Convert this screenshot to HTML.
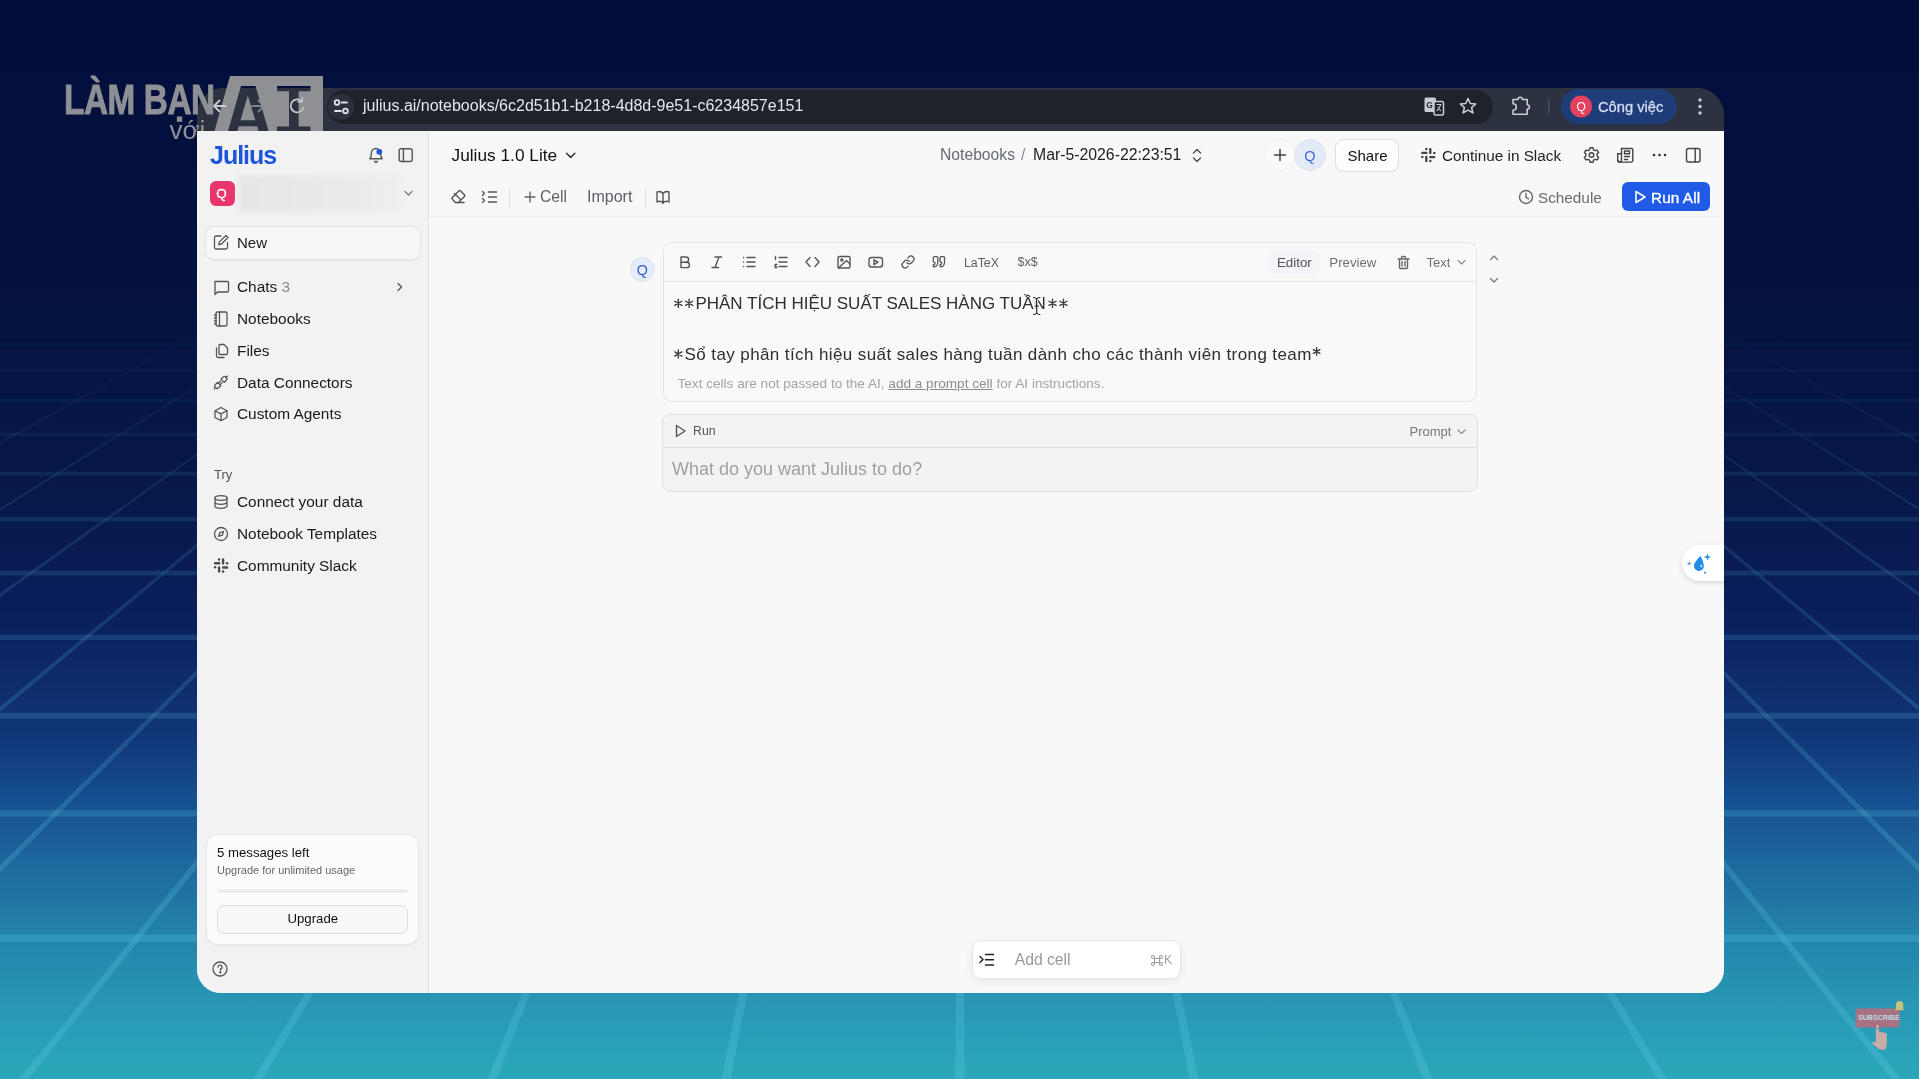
<!DOCTYPE html>
<html><head><meta charset="utf-8">
<style>
*{box-sizing:border-box;margin:0;padding:0}
html,body{width:1919px;height:1079px;overflow:hidden}
body{position:relative;font-family:"Liberation Sans",sans-serif;background:linear-gradient(180deg,#020f3c 0px,#04113d 270px,#061747 470px,#0a1e5a 610px,#11377a 740px,#15508f 800px,#1e6aa0 870px,#2389ac 950px,#2898b5 1010px,#2ca8ba 1079px)}
.abs{position:absolute}
.t{position:absolute;white-space:nowrap;line-height:1}
#win{position:absolute;left:197px;top:88px;width:1526.5px;height:904.5px;border-radius:27px 27px 24px 24px;overflow:hidden;background:linear-gradient(180deg,#2c3240 0,#2c3240 43px,#f4f4f4 43px,#f8f8f8 100%)}
#pg{position:absolute;left:-197px;top:-88px;width:1919px;height:1079px}
</style></head>
<body>
<svg class="abs" style="left:0;top:0" width="1919" height="1079"><defs><linearGradient id="fade" x1="0" y1="0" x2="0" y2="1"><stop offset="0.28" stop-color="#fff" stop-opacity="0"/><stop offset="0.5" stop-color="#fff" stop-opacity="0.45"/><stop offset="1" stop-color="#fff" stop-opacity="1"/></linearGradient><mask id="m"><rect width="1919" height="1079" fill="url(#fade)"/></mask></defs><g mask="url(#m)" fill="#5cc8e6" fill-opacity="0.30"><rect x="0" y="1099.54" width="1919" height="8.68"/><rect x="0" y="934.57" width="1919" height="7.48"/><rect x="0" y="810.08" width="1919" height="6.57"/><rect x="0" y="712.81" width="1919" height="5.86"/><rect x="0" y="634.70" width="1919" height="5.29"/><rect x="0" y="570.60" width="1919" height="4.82"/><rect x="0" y="517.05" width="1919" height="4.43"/><rect x="0" y="471.64" width="1919" height="4.10"/><rect x="0" y="432.66" width="1919" height="3.81"/><rect x="0" y="398.81" width="1919" height="3.57"/><rect x="0" y="369.16" width="1919" height="3.35"/><rect x="0" y="342.97" width="1919" height="3.16"/><rect x="0" y="319.67" width="1919" height="2.99"/><rect x="0" y="298.80" width="1919" height="2.84"/><rect x="0" y="279.99" width="1919" height="2.70"/><rect x="0" y="262.97" width="1919" height="2.58"/><polygon points="-1150.50,1079 -1141.50,1079 330.81,260 328.11,260"/><polygon points="-916.50,1079 -907.50,1079 400.87,260 398.17,260"/><polygon points="-682.50,1079 -673.50,1079 470.93,260 468.23,260"/><polygon points="-448.50,1079 -439.50,1079 540.99,260 538.29,260"/><polygon points="-214.50,1079 -205.50,1079 611.05,260 608.35,260"/><polygon points="19.50,1079 28.50,1079 681.11,260 678.41,260"/><polygon points="253.50,1079 262.50,1079 751.17,260 748.47,260"/><polygon points="487.50,1079 496.50,1079 821.23,260 818.53,260"/><polygon points="721.50,1079 730.50,1079 891.29,260 888.59,260"/><polygon points="955.50,1079 964.50,1079 961.35,260 958.65,260"/><polygon points="1189.50,1079 1198.50,1079 1031.41,260 1028.71,260"/><polygon points="1423.50,1079 1432.50,1079 1101.47,260 1098.77,260"/><polygon points="1657.50,1079 1666.50,1079 1171.53,260 1168.83,260"/><polygon points="1891.50,1079 1900.50,1079 1241.59,260 1238.89,260"/><polygon points="2125.50,1079 2134.50,1079 1311.65,260 1308.95,260"/><polygon points="2359.50,1079 2368.50,1079 1381.71,260 1379.01,260"/><polygon points="2593.50,1079 2602.50,1079 1451.77,260 1449.07,260"/><polygon points="2827.50,1079 2836.50,1079 1521.83,260 1519.13,260"/><polygon points="3061.50,1079 3070.50,1079 1591.89,260 1589.19,260"/></g></svg>
<div id="win"><div id="pg">
<div class="abs" style="left:197px;top:88px;width:1528px;height:43px;background:#2c3240"></div>
<svg class="abs" style="left:0;top:0" width="1919" height="140">
  <g stroke="#c9ccd3" stroke-width="1.8" fill="none" stroke-linecap="round" stroke-linejoin="round">
    <path d="M226 106 L214 106 M219.5 100.5 L214 106 L219.5 111.5"/>
    <path d="M252 106 L264 106 M258.5 100.5 L264 106 L258.5 111.5" stroke="#7d818a"/>
    <path d="M302 101.5 A6.5 6.5 0 1 0 303.5 107.5 M302.5 97.5 L302.5 101.8 L298.3 101.8"/>
  </g>
  <rect x="327" y="90" width="1166" height="34" rx="17" fill="#1e222b"/>
  <circle cx="341" cy="107" r="13" fill="#2c313c"/>
  <g stroke="#dfe2e8" stroke-width="1.8" fill="none" stroke-linecap="round">
    <circle cx="337" cy="102.5" r="2.3"/><path d="M341.5 102.5 L347 102.5"/>
    <circle cx="345.5" cy="111" r="2.3"/><path d="M335 111 L341 111"/>
  </g>
  <g stroke="#c9ccd3" stroke-width="1.6" fill="none" stroke-linejoin="round">
    <rect x="1424.5" y="97.5" width="11.5" height="14.5" rx="1.5" fill="#c9ccd3" stroke="none"/>
    <rect x="1434" y="101.5" width="9.5" height="13.5" rx="1.5" fill="#1e222b" stroke="#c9ccd3" stroke-width="1.5"/>
    <path d="M1436.5 104.5 h4.5 l-4 6.5 M1437.8 107.5 l3.2 3.5" stroke="#c9ccd3" stroke-width="1.1"/>
    <path d="M1468 98.5 l2.3 5 5.4 0.5 -4.1 3.6 1.3 5.3 -4.9 -2.8 -4.9 2.8 1.3 -5.3 -4.1 -3.6 5.4 -0.5 z"/>
    <path d="M1513 99.5 h5 a2.2 2.2 0 0 1 4.4 0 h4.8 v5.2 a2.2 2.2 0 0 1 0 4.4 v5.2 h-14.2 v-4 a2.6 2.6 0 0 0 0 -6.6 z"/>
  </g>
  <rect x="1548" y="99" width="1.5" height="15" fill="#4b505b"/>
  <rect x="1561" y="89" width="116" height="35" rx="17.5" fill="#1e3c78"/>
  <circle cx="1581" cy="106.5" r="11" fill="#e5405e"/>
  <g fill="#c9ccd3"><circle cx="1700" cy="100" r="1.7"/><circle cx="1700" cy="106.5" r="1.7"/><circle cx="1700" cy="113" r="1.7"/></g>
</svg>
<div class="t" style="left:363px;top:98.46px;font-size:16px;color:#e3e6ec;font-weight:400;">julius.ai/notebooks/6c2d51b1-b218-4d8d-9e51-c6234857e151</div>
<div class="t" style="left:1576.5px;top:100.84px;font-size:12px;color:#fff;font-weight:400;">Q</div>
<div class="t" style="left:1426.3px;top:101.00px;font-size:8.5px;color:#1e222b;font-weight:700;">G</div>
<div class="t" style="left:1598px;top:99.56px;font-size:14.7px;color:#d3ddf3;font-weight:400;-webkit-text-stroke:0.3px #d3ddf3">Công việc</div>
<div class="abs" style="left:197px;top:131px;width:232px;height:863px;background:#f2f2f2;border-right:1px solid #e3e3e3"></div>
<div class="abs" style="left:429px;top:131px;width:1296px;height:863px;background:#f8f8f8"></div>
<div class="t" style="left:210px;top:142.84px;font-size:25px;color:#1b55dc;font-weight:700;letter-spacing:-1px">Julius</div>
<svg class="abs" style="left:0;top:0" width="440" height="1000">
 <g stroke="#555" stroke-width="1.4" fill="none" stroke-linecap="round" stroke-linejoin="round">
  <path d="M369.8 158.7 c1.6 -1.5 1.6 -3.3 1.6 -5.6 a4.6 4.6 0 0 1 9.2 0 c0 2.3 0 4.1 1.6 5.6 z"/><path d="M374.6 161.2 l1.4 1.2 1.4 -1.2"/>
  <rect x="399.2" y="148.8" width="13" height="12.7" rx="2"/><path d="M403.4 148.8 v12.7"/>
  <path d="M405 191.5 l3.5 3.5 3.5 -3.5" stroke="#777" stroke-width="1.2"/>
 </g>
 <circle cx="379.3" cy="151.8" r="2.9" fill="#1b55dc"/>
</svg>
<div class="abs" style="left:210px;top:181px;width:25px;height:25px;background:#e8356b;border-radius:6px"></div>
<div class="t" style="left:216.3px;top:186.77px;font-size:13.5px;color:#fff;font-weight:400;-webkit-text-stroke:0.3px #fff">Q</div>
<div class="abs" style="left:238px;top:175px;width:162px;height:37px;background:linear-gradient(90deg,#e9e6e9,#ebe9eb 60%,#efefef);filter:blur(2px)"></div>
<div class="abs" style="left:205px;top:226px;width:216px;height:34px;background:#f7f7f7;border:1px solid #e2e2e2;border-radius:9px;box-shadow:0 1px 1px rgba(0,0,0,0.04)"></div>
<div class="t" style="left:237px;top:235.30px;font-size:15px;color:#1a1a1a;font-weight:400;">New</div>
<div class="t" style="left:237px;top:279.26px;font-size:15.4px;color:#1a1a1a;font-weight:400;">Chats <span style="color:#8a8a8a">3</span></div>
<div class="t" style="left:237px;top:311.16px;font-size:15.4px;color:#1a1a1a;font-weight:400;">Notebooks</div>
<div class="t" style="left:237px;top:342.96px;font-size:15.4px;color:#1a1a1a;font-weight:400;">Files</div>
<div class="t" style="left:237px;top:374.96px;font-size:15.4px;color:#1a1a1a;font-weight:400;">Data Connectors</div>
<div class="t" style="left:237px;top:405.96px;font-size:15.4px;color:#1a1a1a;font-weight:400;">Custom Agents</div>
<div class="t" style="left:214px;top:468.00px;font-size:13px;color:#555;font-weight:400;">Try</div>
<div class="t" style="left:237px;top:493.96px;font-size:15.4px;color:#1a1a1a;font-weight:400;">Connect your data</div>
<div class="t" style="left:237px;top:525.66px;font-size:15.4px;color:#1a1a1a;font-weight:400;">Notebook Templates</div>
<div class="t" style="left:237px;top:557.56px;font-size:15.4px;color:#1a1a1a;font-weight:400;">Community Slack</div>
<svg class="abs" style="left:0;top:0" width="440" height="1000">
 <g stroke="#555" stroke-width="1.3" fill="none" stroke-linecap="round" stroke-linejoin="round">
  <!-- new (edit) -->
  <path d="M221 236 h-5 a1.5 1.5 0 0 0 -1.5 1.5 v10 a1.5 1.5 0 0 0 1.5 1.5 h10 a1.5 1.5 0 0 0 1.5 -1.5 v-5"/>
  <path d="M226 235.5 l2 2 -6.5 6.5 -2.8 0.7 0.7 -2.8 z"/>
  <!-- chats -->
  <path d="M215 281.5 h12.5 a1 1 0 0 1 1 1 v8.5 a1 1 0 0 1 -1 1 h-10 l-2.5 2.5 z"/>
  <path d="M398 283.5 l3.5 3.5 -3.5 3.5"/>
  <!-- notebooks -->
  <rect x="216" y="312" width="11" height="14" rx="1.5"/><path d="M219.5 312 v14 M214.5 315 h2 M214.5 318 h2 M214.5 321 h2 M214.5 324 h2"/>
  <!-- files -->
  <path d="M220 344.5 h4 l3.5 3.5 v5.5 a1 1 0 0 1 -1 1 h-6.5 a1 1 0 0 1 -1 -1 v-8 a1 1 0 0 1 1 -1 z"/>
  <path d="M216.5 348 v8 a1.5 1.5 0 0 0 1.5 1.5 h6"/>
  <!-- data connectors -->
  <g transform="translate(220.8,382.45) rotate(-44)" stroke-width="1.25"><path d="M-9.2 0 H-7 M-1.6 -1.1 H0.6 M-1.6 1.1 H0.6 M7 0 H9.2"/><path d="M-1.6 -2.3 H-4.6 A2.3 2.3 0 0 0 -4.6 2.3 H-1.6 Z" transform="translate(-0.6,0)"/><path d="M1.8 -2.3 H4.6 A2.3 2.3 0 0 1 4.6 2.3 H1.8 Z" transform="translate(0.6,0)"/></g>
  <!-- custom agents (cube) -->
  <path d="M221 407.5 l6 3.2 v6.8 l-6 3.2 -6 -3.2 v-6.8 z M215 410.7 l6 3.2 6 -3.2 M221 413.9 v6.8"/>
  <!-- connect your data (db) -->
  <ellipse cx="221" cy="498" rx="6" ry="2.3"/><path d="M215 498 v8 a6 2.3 0 0 0 12 0 v-8 M215 502 a6 2.3 0 0 0 12 0"/>
  <!-- compass -->
  <circle cx="221" cy="534" r="6.5"/><path d="M223.5 531.5 l-1.2 3.7 -3.7 1.2 1.2 -3.7 z"/>
  <!-- help -->
  <circle cx="220" cy="969" r="7"/><path d="M218 967 a2 2 0 1 1 2.5 2 v1.2"/><circle cx="220.3" cy="972.5" r="0.5" fill="#555"/>
 </g>
 <g stroke="#4a4a4a" stroke-width="2.4" stroke-linecap="round" fill="none">
  <path d="M223.1 559.5 V563.4 M215.1 563.3 H219.2 M219.1 567.4 V571.4 M223.1 567.5 H227.1"/>
 </g>
 <g fill="#4a4a4a"><circle cx="219.1" cy="559.4" r="1.25"/><circle cx="227.1" cy="563.3" r="1.25"/><circle cx="215.1" cy="567.3" r="1.25"/><circle cx="223.1" cy="571.4" r="1.25"/></g>
</svg>
<div class="abs" style="left:206px;top:834px;width:213px;height:111px;background:#fcfcfc;border:1px solid #e6e6e6;border-radius:12px;box-shadow:0 1px 2px rgba(0,0,0,0.04)"></div>
<div class="t" style="left:217px;top:845.83px;font-size:13.2px;color:#111;font-weight:400;">5 messages left</div>
<div class="t" style="left:217px;top:865.19px;font-size:11px;color:#666;font-weight:400;">Upgrade for unlimited usage</div>
<div class="abs" style="left:217px;top:889px;width:191px;height:4px;background:#ececec;border-radius:2px"></div>
<div class="abs" style="left:217px;top:905px;width:191px;height:29px;background:#f7f7f7;border:1px solid #dcdcdc;border-radius:7px"></div>
<div class="t" style="left:287.5px;top:912.33px;font-size:13.2px;color:#111;font-weight:400;">Upgrade</div>
<div class="t" style="left:451.5px;top:146.86px;font-size:17.3px;color:#111;font-weight:400;">Julius 1.0 Lite</div>
<div class="t" style="left:940px;top:147.21px;font-size:15.7px;color:#666a73;font-weight:400;">Notebooks</div>
<div class="t" style="left:1021px;top:147.21px;font-size:15.7px;color:#8a8d94;font-weight:400;">/</div>
<div class="t" style="left:1033px;top:147.13px;font-size:15.8px;color:#222;font-weight:400;">Mar-5-2026-22:23:51</div>
<div class="abs" style="left:429px;top:216px;width:1294px;height:1px;background:#ececec"></div>
<svg class="abs" style="left:0;top:0" width="1919" height="1000">
 <g stroke="#333" stroke-width="1.5" fill="none" stroke-linecap="round" stroke-linejoin="round">
  <path d="M566.5 153.2 l4.2 4.2 4.2 -4.2"/>
  <path d="M1193.5 153 l3.5 -3.5 3.5 3.5 M1193.5 158 l3.5 3.5 3.5 -3.5" stroke="#555"/>
  <path d="M1280 149.5 v11 M1274.5 155 h11" stroke="#444"/>
 </g>
 <circle cx="1280" cy="155" r="15.5" fill="#fafafa" stroke="#e6e6e6" stroke-dasharray="2 2"/>
 <g stroke="#444" stroke-width="1.5" stroke-linecap="round"><path d="M1280 149.5 v11 M1274.5 155 h11"/></g>
 <circle cx="1310" cy="155" r="15.5" fill="#e4ebf8" stroke="#dfe4ee" stroke-width="1"/>
 <g stroke="#444" stroke-width="1.4" fill="none" stroke-linecap="round" stroke-linejoin="round">
  <!-- slack -->
  <g transform="translate(1207.2,-410.4)">
   <g stroke="#444" stroke-width="2.4" stroke-linecap="round" fill="none">
    <path d="M223.1 559.5 V563.4 M215.1 563.3 H219.2 M219.1 567.4 V571.4 M223.1 567.5 H227.1"/>
   </g>
   <g fill="#444" stroke="none"><circle cx="219.1" cy="559.4" r="1.25"/><circle cx="227.1" cy="563.3" r="1.25"/><circle cx="215.1" cy="567.3" r="1.25"/><circle cx="223.1" cy="571.4" r="1.25"/></g>
  </g>
  <!-- gear -->
  <circle cx="1591.5" cy="155" r="2.3"/>
  <path d="M1590 147.8 h3 l0.5 2 1.6 0.9 2 -0.6 1.5 2.6 -1.5 1.4 v1.8 l1.5 1.4 -1.5 2.6 -2 -0.6 -1.6 0.9 -0.5 2 h-3 l-0.5 -2 -1.6 -0.9 -2 0.6 -1.5 -2.6 1.5 -1.4 v-1.8 l-1.5 -1.4 1.5 -2.6 2 0.6 1.6 -0.9 z"/>
  <!-- newspaper -->
  <path d="M1621.5 148.5 h10 a1.3 1.3 0 0 1 1.3 1.3 v10.5 a1.8 1.8 0 0 1 -1.8 1.8 h-11.5 a1.8 1.8 0 0 1 -1.8 -1.8 v-6.5 h3.8"/><path d="M1621.5 148.5 v12.2 a1.5 1.5 0 0 1 -3 0"/>
  <path d="M1624.5 151 h5 v2.8 h-5 z M1624.5 156.5 h5 M1624.5 159.5 h3"/>
  <!-- panel -->
  <rect x="1686.5" y="148.5" width="13.5" height="13.5" rx="2"/><path d="M1695.2 148.5 v13.5"/>
  <!-- clock -->
  <circle cx="1526" cy="197" r="6.5" stroke="#666"/><path d="M1526 193.5 v3.8 l2.5 1.5" stroke="#666"/>
 </g>
 <g fill="#333"><circle cx="1654" cy="155" r="1.3"/><circle cx="1659.5" cy="155" r="1.3"/><circle cx="1665" cy="155" r="1.3"/></g>
 <!-- toolbar icons -->
 <g stroke="#555" stroke-width="1.4" fill="none" stroke-linecap="round" stroke-linejoin="round">
  <path d="M455.5 202.5 l-3.2 -3.2 a1.3 1.3 0 0 1 0 -1.8 l6.5 -6.5 a1.3 1.3 0 0 1 1.8 0 l3.8 3.8 a1.3 1.3 0 0 1 0 1.8 l-6.2 6.2 z M455 202.5 h9 M454.5 193.5 l5.5 5.5"/>
  <path d="M482.5 191.5 l2 2 -2 2 M482.5 198.5 l2 2 -2 2 M488.5 192 h8 M488.5 197 h8 M488.5 202 h8"/>
  <path d="M525 197 h10 M530 192 v10" stroke="#666"/>
  <path d="M663 193.5 a5 5 0 0 0 -6 -1.5 v10 a5 5 0 0 1 6 1 a5 5 0 0 1 6 -1 v-10 a5 5 0 0 0 -6 1.5 z M663 193.5 v10"/>
 </g>
 <rect x="509" y="188" width="1" height="20" fill="#e2e2e2"/>
 <rect x="645" y="188" width="1" height="20" fill="#e2e2e2"/>
</svg>
<div class="t" style="left:1304.3px;top:148.73px;font-size:14.5px;color:#3a69d0;font-weight:400;">Q</div>
<div class="abs" style="left:1335px;top:139px;width:64px;height:33px;background:#fdfdfd;border:1px solid #dedede;border-radius:8px"></div>
<div class="t" style="left:1347.5px;top:147.80px;font-size:15px;color:#111;font-weight:400;">Share</div>
<div class="t" style="left:1442px;top:147.55px;font-size:15.3px;color:#222;font-weight:400;">Continue in Slack</div>
<div class="t" style="left:540px;top:189.21px;font-size:15.7px;color:#5b606b;font-weight:400;">Cell</div>
<div class="t" style="left:587px;top:188.96px;font-size:16px;color:#5b606b;font-weight:400;">Import</div>
<div class="t" style="left:1538px;top:189.55px;font-size:15.3px;color:#666a72;font-weight:400;">Schedule</div>
<div class="abs" style="left:1622px;top:182px;width:88px;height:29px;background:#1f5be6;border-radius:6px"></div>
<svg class="abs" style="left:0;top:0" width="1919" height="1000"><path d="M1636 191.5 v11 l9 -5.5 z" fill="none" stroke="#fff" stroke-width="1.6" stroke-linejoin="round"/></svg>
<div class="t" style="left:1651px;top:189.55px;font-size:15.3px;color:#fff;font-weight:400;letter-spacing:0.1px;-webkit-text-stroke:0.35px #fff">Run All</div>
<svg class="abs" style="left:0;top:0" width="1919" height="1000">
 <circle cx="642.3" cy="269.5" r="12" fill="#e5ebf8" stroke="#dde3ef" stroke-width="1"/>
</svg>
<div class="t" style="left:636.8px;top:262.70px;font-size:14.3px;color:#2e5fcf;font-weight:400;">Q</div>
<div class="abs" style="left:663px;top:242px;width:814px;height:160px;background:#f9f9fa;border:1px solid #e4e4e6;border-radius:9px"></div>
<div class="abs" style="left:664px;top:281px;width:812px;height:1px;background:#e7e7e9"></div>
<div class="abs" style="left:1268px;top:250px;width:52px;height:24px;background:#f3f4f7;border-radius:6px"></div>
<svg class="abs" style="left:0;top:0" width="1919" height="1000">
 <g stroke="#555" stroke-width="1.4" fill="none" stroke-linecap="round" stroke-linejoin="round">
  <path d="M681 257 h5 a2.6 2.6 0 0 1 0 5.2 h-5 z M681 262.2 h5.8 a2.7 2.7 0 0 1 0 5.4 h-5.8 z"/>
  <path d="M715 257 h6.5 M712 267.5 h6.5 M719 257 l-4 10.5"/>
  <path d="M747 257.5 h8 M747 262 h8 M747 266.5 h8 M743.5 257.5 h0.1 M743.5 262 h0.1 M743.5 266.5 h0.1"/>
  <path d="M779 257.5 h8 M779 262 h8 M779 266.5 h8 M775.5 256.5 v3 M775 267.5 h1.8 l-1.8 -2 a1 1 0 0 1 1.8 -0.8"/>
  <path d="M810 257.5 l-4 4.5 4 4.5 M815 257.5 l4 4.5 -4 4.5"/>
  <rect x="838" y="256.5" width="12" height="11.5" rx="1.5"/><circle cx="841.8" cy="260" r="1"/><path d="M850 264 l-3.5 -3.5 -8 7.5"/>
  <rect x="869" y="257.5" width="13.5" height="9.5" rx="2.5"/><path d="M874 259.8 l4 2.4 -4 2.4 z"/>
  <g transform="translate(900.8,254.8) scale(0.6)" stroke-width="2.2"><path d="M10 13a5 5 0 0 0 7.54.54l3-3a5 5 0 0 0-7.07-7.07l-1.72 1.71"/><path d="M14 11a5 5 0 0 0-7.54-.54l-3 3a5 5 0 0 0 7.07 7.07l1.71-1.71"/></g>
  <g transform="translate(932.2,255) scale(0.56,0.56)" stroke-width="2.3"><path d="M3 21c3 0 7-1 7-8V5c0-1.25-.756-2.017-2-2H4c-1.25 0-2 .75-2 1.972V11c0 1.25.75 2 2 2 1 0 1 0 1 1v1c0 1-1 2-2 2s-1 .008-1 1.031V20c0 1 0 1 1 1z" transform="translate(0,0)"/><path d="M15 21c3 0 7-1 7-8V5c0-1.25-.757-2.017-2-2h-4c-1.25 0-2 .75-2 1.972V11c0 1.25.75 2 2 2h.75c0 2.25.25 4-2.75 4v3c0 1 0 1 1 1z"/></g>
  <path d="M1398 259 h11 M1401.5 259 v-1.5 a1 1 0 0 1 1 -1 h2 a1 1 0 0 1 1 1 v1.5 M1399.5 259 v8.5 a1 1 0 0 0 1 1 h6 a1 1 0 0 0 1 -1 v-8.5 M1402 261.5 v4.5 M1405 261.5 v4.5" stroke="#666"/>
  <path d="M1458 260.5 l3.5 3.5 3.5 -3.5" stroke="#888" stroke-width="1.1"/>
  <path d="M1490.5 259.5 l3.5 -3.5 3.5 3.5 M1490.5 278.5 l3.5 3.5 3.5 -3.5" stroke="#777" stroke-width="1.2"/>
 </g>
</svg>
<div class="t" style="left:964px;top:256.59px;font-size:12.3px;color:#5d6068;font-weight:400;">LaTeX</div>
<div class="t" style="left:1017.5px;top:256.42px;font-size:12.5px;color:#5d6068;font-weight:400;">$x$</div>
<div class="t" style="left:1277px;top:255.74px;font-size:13.3px;color:#4f535b;font-weight:400;">Editor</div>
<div class="t" style="left:1329.3px;top:255.78px;font-size:13.25px;color:#6d7078;font-weight:400;">Preview</div>
<div class="t" style="left:1426.5px;top:256.00px;font-size:13px;color:#6d7078;font-weight:400;">Text</div>
<div class="t" style="left:695.4px;top:294.81px;font-size:17px;color:#2e2e2e;font-weight:400;">PHÂN TÍCH HIỆU SUẤT SALES HÀNG TUẦN</div>
<div class="t" style="left:684.6px;top:345.61px;font-size:17px;color:#2e2e2e;font-weight:400;letter-spacing:0.4px">Sổ tay phân tích hiệu suất sales hàng tuần dành cho các thành viên trong team</div>
<svg class="abs" style="left:0;top:0" width="1919" height="1000"><path d="M678.30 299.20 L678.30 307.40 M674.75 301.25 L681.85 305.35 M681.85 301.25 L674.75 305.35 " stroke="#3a3a3a" stroke-width="1.35" stroke-linecap="round" fill="none"/><path d="M689.10 299.20 L689.10 307.40 M685.55 301.25 L692.65 305.35 M692.65 301.25 L685.55 305.35 " stroke="#3a3a3a" stroke-width="1.35" stroke-linecap="round" fill="none"/><path d="M1052.50 299.20 L1052.50 307.40 M1048.95 301.25 L1056.05 305.35 M1056.05 301.25 L1048.95 305.35 " stroke="#3a3a3a" stroke-width="1.35" stroke-linecap="round" fill="none"/><path d="M1063.50 299.20 L1063.50 307.40 M1059.95 301.25 L1067.05 305.35 M1067.05 301.25 L1059.95 305.35 " stroke="#3a3a3a" stroke-width="1.35" stroke-linecap="round" fill="none"/><path d="M678.30 349.90 L678.30 358.10 M674.75 351.95 L681.85 356.05 M681.85 351.95 L674.75 356.05 " stroke="#3a3a3a" stroke-width="1.35" stroke-linecap="round" fill="none"/><path d="M1316.60 347.70 L1316.60 355.30 M1313.31 349.60 L1319.89 353.40 M1319.89 349.60 L1313.31 353.40 " stroke="#3a3a3a" stroke-width="1.35" stroke-linecap="round" fill="none"/><path d="M1033.5 297.5 c1.5 0 2.5 0.5 3.2 1.5 c0.7 -1 1.7 -1.5 3.2 -1.5 M1036.7 299 v14 M1033.5 314.5 c1.5 0 2.5 -0.5 3.2 -1.5 c0.7 1 1.7 1.5 3.2 1.5 M1035 306 h3.4" stroke="#fff" stroke-width="3" fill="none" stroke-linecap="round"/><path d="M1033.5 297.5 c1.5 0 2.5 0.5 3.2 1.5 c0.7 -1 1.7 -1.5 3.2 -1.5 M1036.7 299 v14 M1033.5 314.5 c1.5 0 2.5 -0.5 3.2 -1.5 c0.7 1 1.7 1.5 3.2 1.5 M1035 306 h3.4" stroke="#111" stroke-width="1.1" fill="none" stroke-linecap="round"/></svg>
<div class="t" style="left:677.5px;top:376.79px;font-size:13.6px;color:#a3a3a3;font-weight:400;">Text cells are not passed to the AI, <span style="text-decoration:underline;color:#8d8d8d">add a prompt cell</span> for AI instructions.</div>
<div class="abs" style="left:662px;top:414px;width:816px;height:78px;background:#f3f3f3;border:1px solid #e0e0e0;border-radius:8px"></div>
<div class="abs" style="left:663px;top:447px;width:814px;height:1px;background:#dedede"></div>
<svg class="abs" style="left:0;top:0" width="1919" height="1000">
 <g stroke="#555" stroke-width="1.4" fill="none" stroke-linecap="round" stroke-linejoin="round">
  <path d="M676.5 425.5 v11 l8.5 -5.5 z"/>
  <path d="M1458 430 l3.5 3.5 3.5 -3.5" stroke="#888" stroke-width="1.1"/>
 </g>
</svg>
<div class="t" style="left:693px;top:425.09px;font-size:12.3px;color:#555;font-weight:400;">Run</div>
<div class="t" style="left:1409.5px;top:424.50px;font-size:13px;color:#777;font-weight:400;">Prompt</div>
<div class="t" style="left:672px;top:460.26px;font-size:18px;color:#a0a0a0;font-weight:400;">What do you want Julius to do?</div>
<div class="abs" style="left:972px;top:940px;width:209px;height:39px;background:#fff;border:1px solid #e6e6e6;border-radius:9px;box-shadow:0 3px 8px rgba(0,0,0,0.06)"></div>
<svg class="abs" style="left:0;top:0" width="1919" height="1000">
 <g stroke="#222" stroke-width="1.5" fill="none" stroke-linecap="round" stroke-linejoin="round">
  <path d="M980 956.5 l3 3 -3 3 M985.5 954.5 h8 M985.5 959.8 h8 M985.5 965 h8"/>
 </g>
</svg>
<div class="t" style="left:1014.7px;top:951.71px;font-size:15.7px;color:#9a9a9a;font-weight:400;">Add cell</div>
<svg class="abs" style="left:0;top:0" width="1919" height="1000"><g stroke="#a0a0a0" stroke-width="1.1" fill="none"><path d="M1154.5 957 v7 M1159.5 957 v7 M1153 958.5 h8 M1153 962.5 h8"/><circle cx="1153" cy="957" r="1.5"/><circle cx="1161" cy="957" r="1.5"/><circle cx="1153" cy="964" r="1.5"/><circle cx="1161" cy="964" r="1.5"/></g></svg>
<div class="t" style="left:1164px;top:954.34px;font-size:12px;color:#a0a0a0;font-weight:400;">K</div>
<div class="abs" style="left:1682px;top:545px;width:60px;height:36px;background:#fff;border-radius:18px;box-shadow:0 2px 5px rgba(0,0,0,0.13)"></div>
<svg class="abs" style="left:0;top:0" width="1919" height="1000">
 <path d="M1700.5 556 c-3.5 3.5 -6.5 7 -6.5 10 a4.9 4.9 0 0 0 9.8 0 c0 -2.8 -1.3 -6 -3.3 -10 z" fill="#1f8be8"/>
 <ellipse cx="1701.2" cy="566" rx="0.8" ry="1.3" fill="#fff"/>
 <path d="M1707.4 553.2 l0.9 2.9 2.9 0.9 -2.9 0.9 -0.9 2.9 -0.9 -2.9 -2.9 -0.9 2.9 -0.9 z M1689.2 561.2 l0.6 1.8 1.8 0.6 -1.8 0.6 -0.6 1.8 -0.6 -1.8 -1.8 -0.6 1.8 -0.6 z" fill="#2b8fe0"/>
 <circle cx="1705" cy="572.8" r="1" fill="#2b8fe0"/>
</svg>
</div></div>
<div class="abs" style="left:0;top:0;width:1919px;height:1079px;mix-blend-mode:lighten">
<svg class="abs" style="left:0;top:0" width="1919" height="1079">
  <path d="M230 76 L323 76 L323 140 L212 140 Z M228 131 L241 86 L255.5 86 L268.5 131 L258.5 131 L257 126.3 L238.8 126.3 L237.3 131 Z M247.8 95.5 L240.5 120.3 L255.3 120.3 Z M277 86 H310.5 V91.3 H298.6 V126.5 H310.5 V131 H277 V126.5 H289 V91.3 H277 Z" fill="#8f9094" fill-rule="evenodd"/>
</svg>
<div class="t" style="left:64.3px;top:78.62px;font-size:42.5px;font-weight:700;color:#8e9095;-webkit-text-stroke:1px #8e9095;transform:scaleX(0.783);transform-origin:0 0;letter-spacing:-0.5px">LÀM BẠN</div>
<div class="t" style="left:169.5px;top:116.59px;font-size:26px;color:#8e9095">với</div>
</div>
<svg class="abs" style="left:0;top:0" width="1919" height="1079">
 <rect x="1855.5" y="1008.5" width="44" height="19" rx="1.5" fill="#a87282"/>
 <path d="M1896 1004.5 a3.6 3.6 0 0 1 7.2 0 v4.8 h1.2 v1 h-9.6 v-1 h1.2 z" fill="#c9c27a"/>
 <path d="M1875.8 1026.3 a1.6 1.6 0 0 1 3.2 0 V1033 a1.3 1.3 0 0 1 2.6 0 v0.4 a1.3 1.3 0 0 1 2.6 0 v0.6 a1.3 1.3 0 0 1 2.6 0 V1045.5 l-1.6 4 H1879.5 l-6.8 -5.6 a1.3 1.3 0 0 1 1.6 -2 l1.5 1 Z" fill="#c9aba9"/><circle cx="1877.4" cy="1026" r="2.6" fill="none" stroke="#9d5f70" stroke-width="1" opacity="0.6"/>
</svg>
<div class="t" style="left:1857.5px;top:1014px;font-size:7.6px;font-weight:700;color:#b9dfe6;letter-spacing:-0.1px;transform:scaleX(0.95);transform-origin:0 0">SUBSCRIBE</div>
</body></html>
